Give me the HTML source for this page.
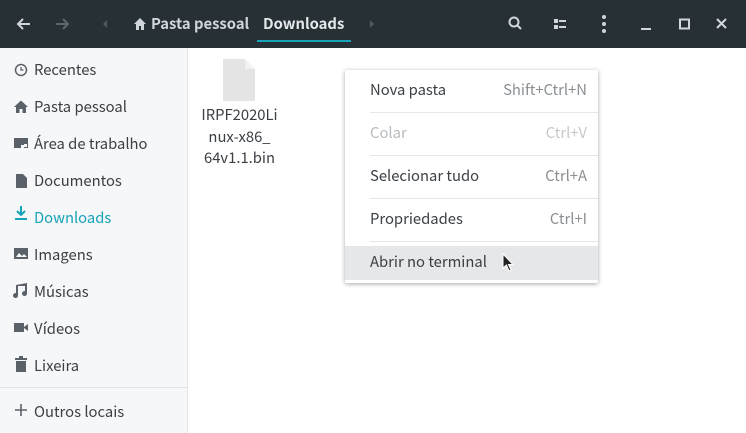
<!DOCTYPE html>
<html><head><meta charset="utf-8"><style>
*{margin:0;padding:0;box-sizing:border-box}
body{width:746px;height:433px;overflow:hidden;background:#fff;font-family:"Noto Sans CJK SC","Liberation Sans",sans-serif;font-size:14.8px;color:#3b4045;position:relative}
.hdr{position:absolute;left:0;top:0;width:746px;height:48px;background:#263035;color:#d0d6da}
.hdr .t{position:absolute;top:14px;font-size:14.8px;line-height:20px}
.side{position:absolute;left:0;top:48px;width:188px;height:385px;background:#f6f7f8;border-right:1px solid #e2e4e6}
.it{position:absolute;left:34px;line-height:20px;color:#3b4045}
.menu{position:absolute;left:345px;top:70px;width:253px;height:213px;background:#fff;box-shadow:0 1px 5px rgba(0,0,0,.35);border-radius:2px}
.mi{position:absolute;left:25px;line-height:20px}
.sc{position:absolute;right:11px;line-height:20px;color:#8a8f93}
.sep{position:absolute;left:25px;right:0;height:1px;background:#e6e7e8}
</style></head><body>
<div class="hdr">
<svg style="position:absolute;left:0;top:0" width="746" height="48">
<g stroke="#d0d6da" stroke-width="2" fill="none"><path d="M30 24H18M23 19l-5 5 5 5"/></g>
<g stroke="#5d676c" stroke-width="2" fill="none"><path d="M56 24h12M63 19l5 5-5 5"/></g>
<path d="M107 20v8l-4-4z" fill="#4f5a5f"/>
<path d="M370 20v8l4-4z" fill="#4f5a5f"/>
<path d="M134 24l6-6 6 6h-2v6h-3v-4h-2v4h-3v-6z" fill="#d0d6da"/>
<rect x="257" y="40" width="94" height="2" fill="#17a2b8"/>
<g stroke="#d0d6da" stroke-width="2" fill="none"><circle cx="514" cy="22" r="4.5"/><path d="M517 25l4 4"/></g>
<g fill="#d0d6da"><rect x="554" y="19" width="4" height="4"/><rect x="554" y="25" width="4" height="4"/><rect x="559" y="20" width="7" height="2"/><rect x="559" y="26" width="7" height="2"/>
<circle cx="604" cy="17" r="2"/><circle cx="604" cy="24" r="2"/><circle cx="604" cy="31" r="2"/>
<rect x="641" y="28" width="10" height="2"/></g>
<rect x="680" y="19.5" width="9" height="9" stroke="#d0d6da" stroke-width="2" fill="none"/>
<path d="M717 19l9 9M726 19l-9 9" stroke="#d0d6da" stroke-width="2"/>
</svg>
<div class="t" style="left:151px;font-weight:600">Pasta pessoal</div>
<div class="t" style="left:263px;font-weight:600;color:#e4e8ea">Downloads</div>
</div>
<div class="side">
<svg style="position:absolute;left:0;top:0" width="188" height="385" fill="#5a6168">
<circle cx="21" cy="22" r="5.5" stroke="#5a6168" stroke-width="1.5" fill="none"/><path d="M21 19v3h2.5" stroke="#5a6168" stroke-width="1.3" fill="none"/>
<path d="M14 59l7-6.5 7 6.5h-2v6h-3.5v-4h-3v4H16v-6z"/>
<path d="M14 90h14v10h-4v-3h-3v3h-7z"/><rect x="24" y="96" width="3" height="3" fill="#f6f7f8"/>
<path d="M16 126h7l4 4v10H16z"/>
<path d="M21 158v8M17 163l4 4 4-4" stroke="#17a2b8" stroke-width="2" fill="none"/><rect x="15" y="170" width="12" height="2" fill="#17a2b8"/>
<rect x="14" y="200" width="14" height="11"/><path d="M16 209l3-4 3 3 2-2 3 3z" fill="#f6f7f8"/>
<path d="M18 238v9.5a2.5 2.5 0 1 1-2-2.4V237l11-2v10.5a2.5 2.5 0 1 1-2-2.4V238z"/>
<rect x="14" y="275" width="10" height="9"/><path d="M24 279l4-3v7l-4-3z"/>
<rect x="15" y="310" width="12" height="2"/><rect x="19" y="308" width="4" height="2"/><rect x="16" y="313" width="10" height="11"/>
<rect x="0" y="339" width="188" height="1" fill="#e2e4e6"/>
<path d="M21 356v12M15 362h12" stroke="#5a6168" stroke-width="1.6"/>
</svg>
<div class="it" style="top:12px">Recentes</div>
<div class="it" style="top:49px">Pasta pessoal</div>
<div class="it" style="top:86px">Área de trabalho</div>
<div class="it" style="top:123px">Documentos</div>
<div class="it" style="top:160px;color:#17a2b8">Downloads</div>
<div class="it" style="top:197px">Imagens</div>
<div class="it" style="top:234px">Músicas</div>
<div class="it" style="top:271px">Vídeos</div>
<div class="it" style="top:308px">Lixeira</div>
<div class="it" style="top:354px">Outros locais</div>
</div>
<svg style="position:absolute;left:223px;top:59px" width="33" height="42"><path d="M0 0h22l10 10v32H0z" fill="#e4e4e4"/><path d="M22 0v10h10" fill="#f2f2f2"/></svg>
<div style="position:absolute;left:190px;top:104px;width:99px;text-align:center;line-height:21.5px;color:#3b4045">IRPF2020Li<br>nux-x86_<br>64v1.1.bin</div>
<div class="menu">
<div class="mi" style="top:10px">Nova pasta</div><div class="sc" style="top:10px">Shift+Ctrl+N</div>
<div class="sep" style="top:42px"></div>
<div class="mi" style="top:53px;color:#b8bcbf">Colar</div><div class="sc" style="top:53px;color:#c6c9cb">Ctrl+V</div>
<div class="sep" style="top:85px"></div>
<div class="mi" style="top:96px">Selecionar tudo</div><div class="sc" style="top:96px">Ctrl+A</div>
<div class="sep" style="top:128px"></div>
<div class="mi" style="top:139px">Propriedades</div><div class="sc" style="top:139px">Ctrl+I</div>
<div class="sep" style="top:171px"></div>
<div style="position:absolute;left:0;right:0;top:176px;height:34px;background:#e6e7e8"></div>
<div class="mi" style="top:182px">Abrir no terminal</div>
</div>
<svg style="position:absolute;left:502px;top:253px" width="14" height="20"><path d="M1 1v14l3.5-3 2.5 6 2-1-2.5-5.5H11z" fill="#222" stroke="#fff" stroke-width="1"/></svg>
</body></html>
